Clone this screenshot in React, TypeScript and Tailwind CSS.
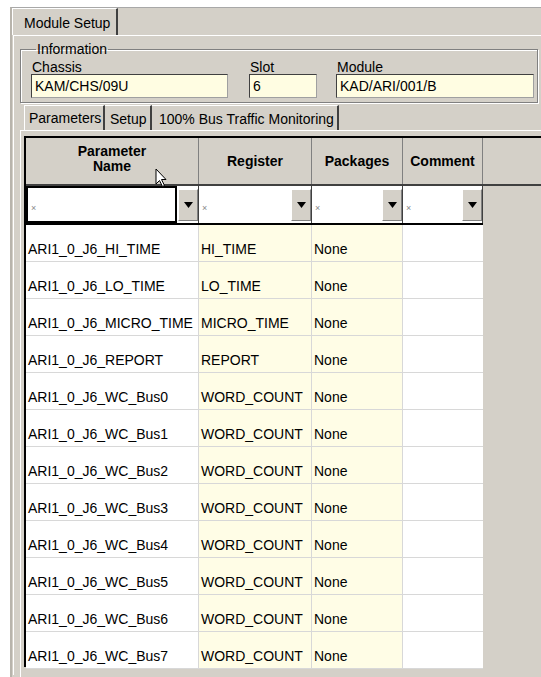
import React from 'react';

const rows = [
  ['ARI1_0_J6_HI_TIME', 'HI_TIME'],
  ['ARI1_0_J6_LO_TIME', 'LO_TIME'],
  ['ARI1_0_J6_MICRO_TIME', 'MICRO_TIME'],
  ['ARI1_0_J6_REPORT', 'REPORT'],
  ['ARI1_0_J6_WC_Bus0', 'WORD_COUNT'],
  ['ARI1_0_J6_WC_Bus1', 'WORD_COUNT'],
  ['ARI1_0_J6_WC_Bus2', 'WORD_COUNT'],
  ['ARI1_0_J6_WC_Bus3', 'WORD_COUNT'],
  ['ARI1_0_J6_WC_Bus4', 'WORD_COUNT'],
  ['ARI1_0_J6_WC_Bus5', 'WORD_COUNT'],
  ['ARI1_0_J6_WC_Bus6', 'WORD_COUNT'],
  ['ARI1_0_J6_WC_Bus7', 'WORD_COUNT'],
];

function DropButton() {
  return (
    <div className="flex h-[32px] w-[20px] items-center justify-center bg-[#d4d0c8] border-l border-t border-white border-r border-b border-r-[#808080] border-b-[#808080]">
      <svg width="9" height="6" viewBox="0 0 9 6">
        <path d="M0 0h9L4.5 6z" fill="#000" />
      </svg>
    </div>
  );
}

function FilterCell({ width, focused }: { width: string; focused?: boolean }) {
  return (
    <div className={`flex ${width} h-[37px] items-center border-r border-[#404040] bg-white`}>
      <div
        className={`flex flex-1 h-[37px] items-center pl-[3px] ${
          focused ? 'border-2 border-black' : ''
        }`}
      >
        <span className="text-[9px] leading-none text-[#888] pt-[8px]">×</span>
      </div>
      <div className="pl-[1px]">
        <DropButton />
      </div>
    </div>
  );
}

function Input({ width, value }: { width: string; value: string }) {
  return (
    <div
      className={`${width} h-[24px] border border-[#404040] border-r-[#a0a0a0] border-b-[#a0a0a0] bg-[#fffde2] pl-[3px] text-[14px] leading-[22px] text-black`}
    >
      {value}
    </div>
  );
}

export default function App() {
  return (
    <div
      className="relative w-[541px] h-[677px] overflow-hidden bg-white pt-[7px] pl-[10px] text-black"
      style={{ fontFamily: '"Liberation Sans", Arial, sans-serif' }}
    >
      <div className="h-[670px] bg-[#d4d0c8] border-l-2 border-t border-[#a8a8a8] border-l-[#b8b4ac]">
        {/* outer tab strip */}
        <div className="flex h-[27px]">
          <div className="w-[106px] border-l border-t border-white border-r-2 border-r-[#404040] pl-[11px] pt-[4px] text-[14px]">
            Module Setup
          </div>
        </div>

        {/* outer tab page */}
        <div className="ml-[1px] h-[640px] border-t border-l border-white pl-[6px] pt-[6px]">
          <fieldset className="w-[518px] h-[61px] border border-[#808080] shadow-[inset_1px_1px_0_#fff,1px_1px_0_#fff] pl-[10px]">
            <legend className="ml-[5px] px-[1px] text-[14px] leading-[14px]">Information</legend>
            <div className="flex mt-[4px]">
              <div className="flex flex-col w-[218px]">
                <span className="text-[14px] leading-[14px] pl-[1px]">Chassis</span>
                <Input width="w-[197px]" value="KAM/CHS/09U" />
              </div>
              <div className="flex flex-col w-[87px]">
                <span className="text-[14px] leading-[14px] pl-[1px]">Slot</span>
                <Input width="w-[68px]" value="6" />
              </div>
              <div className="flex flex-col">
                <span className="text-[14px] leading-[14px] pl-[1px]">Module</span>
                <Input width="w-[198px]" value="KAD/ARI/001/B" />
              </div>
            </div>
          </fieldset>

          {/* inner tab strip */}
          <div className="flex h-[25px] mt-[2px] pl-[4px] text-[14px]">
            <div className="w-[81px] border-l border-t border-white border-r-2 border-r-[#404040] pl-[4px] pt-[2px]">
              Parameters
            </div>
            <div className="w-[47px] border-t border-white border-r-2 border-r-[#404040] pl-[5px] pt-[3px]">
              Setup
            </div>
            <div className="w-[187px] border-t border-white border-r-2 border-r-[#404040] pl-[7px] pt-[3px]">
              100% Bus Traffic Monitoring
            </div>
          </div>

          {/* inner tab page */}
          <div className="h-[560px] border-t border-l border-white pl-[3px] pt-[5px]">
            <div className="w-[530px] h-[531px] border-l-2 border-t-2 border-black bg-[#d4d0c8]">
              {/* header */}
              <div className="flex h-[48px] border-b-2 border-[#404040] text-[14px] font-bold">
                <div className="flex w-[173px] items-center justify-center border-r border-[#808080] text-center leading-[15px] pb-[4px]">
                  Parameter
                  <br />
                  Name
                </div>
                <div className="flex w-[113px] items-center justify-center border-r border-[#808080]">
                  Register
                </div>
                <div className="flex w-[91px] items-center justify-center border-r border-[#808080]">
                  Packages
                </div>
                <div className="flex w-[80px] items-center justify-center border-r border-[#808080]">
                  Comment
                </div>
              </div>

              {/* filter row */}
              <div className="flex w-[457px] border-b-2 border-black">
                <FilterCell width="w-[173px]" focused />
                <FilterCell width="w-[113px]" />
                <FilterCell width="w-[91px]" />
                <FilterCell width="w-[80px]" />
              </div>

              {/* data rows */}
              {rows.map(([name, reg]) => (
                <div key={name} className="flex w-[457px] h-[37px] border-b border-[#d8d8d8] text-[14px] leading-none">
                  <div className="flex w-[173px] items-end bg-white border-r border-[#d8d8d8] pl-[2px] pb-[5px]">
                    {name}
                  </div>
                  <div className="flex w-[113px] items-end bg-[#fffde6] border-r border-[#d8d8d8] pl-[2px] pb-[5px]">
                    {reg}
                  </div>
                  <div className="flex w-[91px] items-end bg-[#fffde6] border-r border-[#d8d8d8] pl-[2px] pb-[5px]">
                    None
                  </div>
                  <div className="w-[80px] bg-white" />
                </div>
              ))}
            </div>
          </div>
        </div>
      </div>

      {/* mouse pointer over the header */}
      <svg className="absolute left-[155px] top-[168px]" width="13" height="20" viewBox="0 0 13 20">
        <path d="M1 1v15l3.5-3.5 3 6 2-1-3-6H11z" fill="#fff" stroke="#000" strokeWidth="1" />
      </svg>
    </div>
  );
}
